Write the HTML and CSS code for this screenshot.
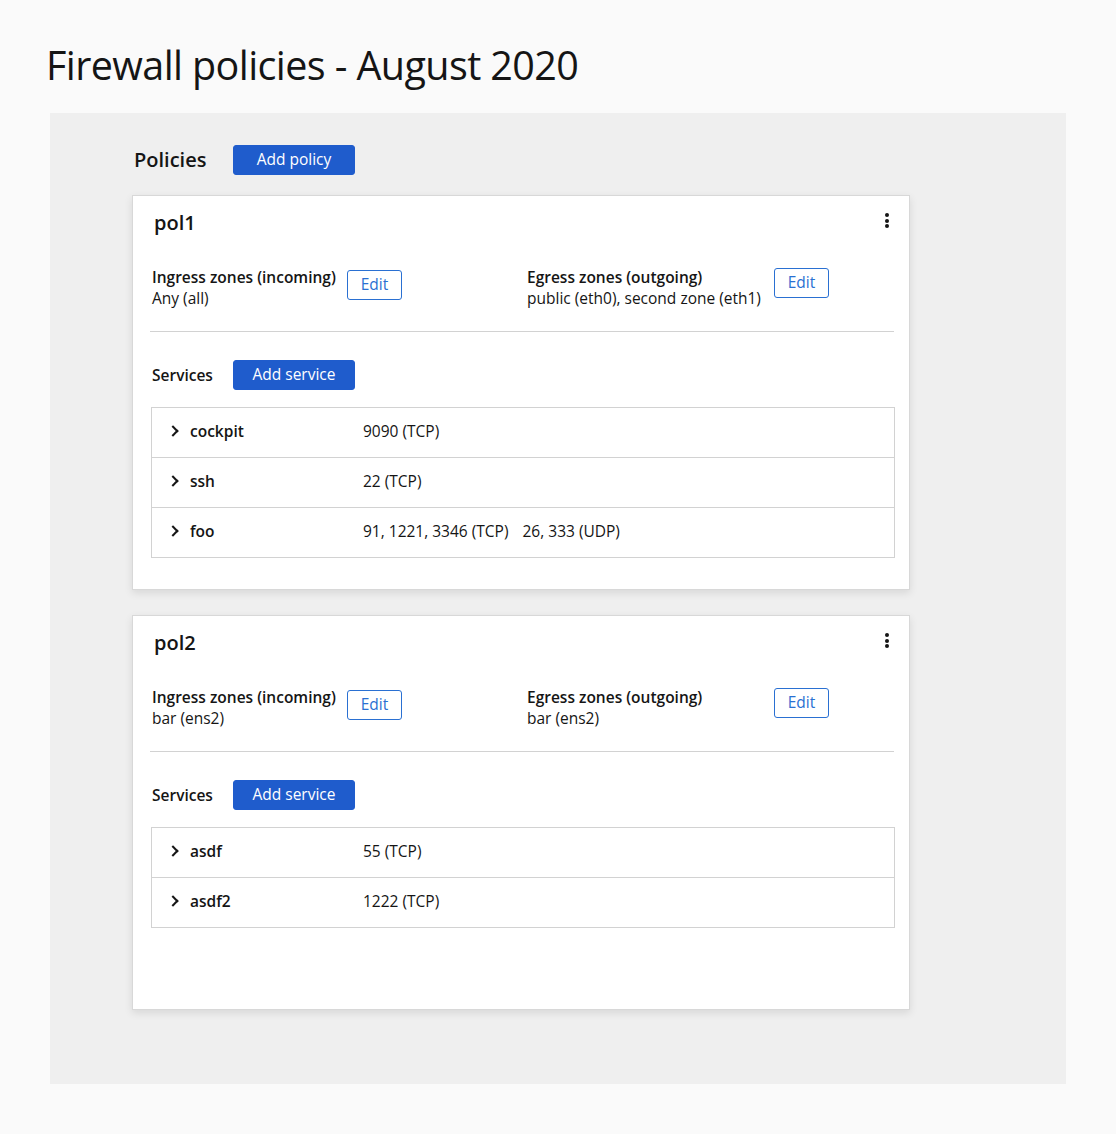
FILE: index.html
```html
<!DOCTYPE html>
<html lang="en">
<head>
<meta charset="utf-8">
<title>Firewall policies</title>
<link rel="stylesheet" href="styles.css">
</head>
<body>
<h1 class="page-title">Firewall policies - August 2020</h1>
<main class="panel">
  <div class="policies-head">
    <h2 class="policies-title">Policies</h2>
    <button class="btn btn-primary btn-policy">Add policy</button>
  </div>

  <section class="card">
    <div class="card-head">
      <h3 class="card-title">pol1</h3>
      <span class="kebab"><i></i><i></i><i></i></span>
    </div>
    <div class="zones">
      <div class="zone zone-in">
        <div class="zone-text"><div class="zone-label">Ingress zones (incoming)</div><div class="zone-value">Any (all)</div></div>
        <button class="btn btn-secondary">Edit</button>
      </div>
      <div class="zone zone-out">
        <div class="zone-text"><div class="zone-label">Egress zones (outgoing)</div><div class="zone-value">public (eth0), second zone (eth1)</div></div>
        <button class="btn btn-secondary">Edit</button>
      </div>
    </div>
    <hr class="divider">
    <div class="services-head">
      <span class="services-title">Services</span>
      <button class="btn btn-primary btn-service">Add service</button>
    </div>
    <div class="table">
      <div class="row"><span class="chev"></span><span class="svc-name">cockpit</span><span class="svc-ports">9090 (TCP)</span></div>
      <div class="row"><span class="chev"></span><span class="svc-name">ssh</span><span class="svc-ports">22 (TCP)</span></div>
      <div class="row"><span class="chev"></span><span class="svc-name">foo</span><span class="svc-ports">91, 1221, 3346 (TCP)<span class="udp">26, 333 (UDP)</span></span></div>
    </div>
  </section>

  <section class="card">
    <div class="card-head">
      <h3 class="card-title">pol2</h3>
      <span class="kebab"><i></i><i></i><i></i></span>
    </div>
    <div class="zones">
      <div class="zone zone-in">
        <div class="zone-text"><div class="zone-label">Ingress zones (incoming)</div><div class="zone-value">bar (ens2)</div></div>
        <button class="btn btn-secondary">Edit</button>
      </div>
      <div class="zone zone-out">
        <div class="zone-text"><div class="zone-label">Egress zones (outgoing)</div><div class="zone-value">bar (ens2)</div></div>
        <button class="btn btn-secondary">Edit</button>
      </div>
    </div>
    <hr class="divider">
    <div class="services-head">
      <span class="services-title">Services</span>
      <button class="btn btn-primary btn-service">Add service</button>
    </div>
    <div class="table">
      <div class="row"><span class="chev"></span><span class="svc-name">asdf</span><span class="svc-ports">55 (TCP)</span></div>
      <div class="row"><span class="chev"></span><span class="svc-name">asdf2</span><span class="svc-ports">1222 (TCP)</span></div>
    </div>
  </section>
</main>
</body>
</html>
```

FILE: styles.css
```css
* { box-sizing: border-box; }
html, body { margin: 0; padding: 0; }
body {
  background: #fafafa;
  color: #151515;
  font-family: "Open Sans", "Liberation Sans", sans-serif;
  font-size: 15.5px;
  width: 1116px;
  min-height: 1134px;
}
.page-title {
  margin: 0;
  padding: 38px 0 0 46px;
  height: 113px;
  font-weight: 400;
  font-size: 39.5px;
  line-height: 54px;
  letter-spacing: -0.6px;
}
.panel {
  margin-left: 50px;
  width: 1016px;
  height: 971px;
  background: #efefef;
  padding: 32px 0 0 82px;
}
.policies-head {
  display: flex;
  align-items: center;
  height: 30px;
  margin-bottom: 20px;
}
.policies-title {
  margin: -2px 0 0 2px;
  width: 99px;
  font-size: 20px;
  font-weight: 600;
}
.btn {
  font-family: inherit;
  font-size: 15.5px;
  border-radius: 3px;
  cursor: pointer;
  padding: 0 0 2px;
}
.btn-primary {
  background: #1f5ccc;
  border: 1px solid #1f5ccc;
  color: #fff;
  height: 30px;
}
.btn-policy { width: 122px; }
.btn-service { width: 122px; }
.btn-secondary {
  background: #fff;
  border: 1px solid #2a70d2;
  color: #2a70d2;
  width: 55px;
  height: 30px;
}
.card {
  width: 778px;
  height: 395px;
  background: #fff;
  border: 1px solid #d8d8d8;
  box-shadow: 0 3px 8px rgba(0,0,0,0.1);
  padding: 0 15px 0 17px;
  margin-bottom: 25px;
}
.card-head {
  display: flex;
  align-items: center;
  justify-content: space-between;
  height: 52px;
  padding-left: 4px;
}
.card-title {
  margin: 0;
  font-size: 20px;
  font-weight: 600;
}
.kebab {
  display: flex;
  flex-direction: column;
  gap: 1.5px;
  margin-right: 5px;
  margin-top: -3px;
}
.kebab i {
  display: block;
  width: 4px;
  height: 4px;
  border-radius: 50%;
  background: #151515;
}
.zones {
  display: flex;
  padding-left: 2px;
  height: 83px;
  padding-top: 21px;
}
.zone { display: flex; align-items: flex-start; }
.zone-in { width: 375px; }
.zone-text { line-height: 21px; margin-top: -2px; }
.zone-in .zone-text { width: 195px; }
.zone-out .zone-text { width: 247px; }
.zone-label { font-weight: 600; }
.zone-in .btn { margin-top: 1px; }
.zone-out .btn { margin-top: -1px; }
.divider {
  margin: 0;
  border: 0;
  border-top: 1px solid #d2d2d2;
  width: 744px;
}
.services-head {
  display: flex;
  align-items: center;
  height: 30px;
  margin-top: 28px;
  margin-bottom: 17px;
  padding-left: 2px;
}
.services-title {
  width: 81px;
  font-weight: 600;
  margin-top: -1px;
}
.table {
  width: 744px;
  margin-left: 1px;
  border: 1px solid #d2d2d2;
}
.row {
  display: flex;
  align-items: center;
  height: 50px;
  border-top: 1px solid #d2d2d2;
  padding-left: 18px;
  padding-bottom: 3px;
}
.row:first-child { border-top: 0; height: 49px; }
.chev {
  width: 8px;
  height: 8px;
  border-right: 2.5px solid #151515;
  border-top: 2.5px solid #151515;
  transform: rotate(45deg);
  margin-right: 13px;
  margin-left: -1px;
}
.svc-name {
  width: 173px;
  font-weight: 600;
}
.udp { margin-left: 14px; }
```
